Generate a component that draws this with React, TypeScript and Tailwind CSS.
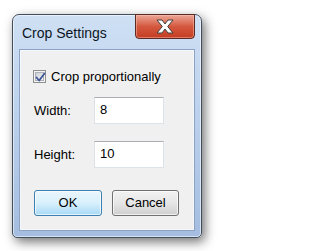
import { useState } from "react";

function CloseGlyph() {
  return (
    <svg width="20" height="15" viewBox="0 0 20 15">
      <path
        d="M2 1h5L10 5 13 1h5l-5.3 6.5L18 14h-5l-3-4-3 4H2l5.3-6.5z"
        fill="#ffffff"
        stroke="#404040"
        strokeWidth="1"
        strokeLinejoin="round"
      />
    </svg>
  );
}

function CheckBox({ checked }: { checked: boolean }) {
  return (
    <div className="h-[13px] w-[13px] border border-[#8e8f8f] bg-[#f4f4f4] p-[1px] shrink-0">
      <div className="relative h-full w-full border border-[#aeb3b9] bg-gradient-to-br from-[#cbcfd5] to-[#f6f6f6]">
        {checked && (
          <svg
            className="absolute -left-[1px] -top-[1px]"
            width="11"
            height="11"
            viewBox="0 0 11 11"
          >
            <path
              d="M1.5 5.5 4.2 8.5 9.5 1.5"
              fill="none"
              stroke="#3d5696"
              strokeWidth="1.8"
              strokeLinecap="round"
              strokeLinejoin="round"
            />
          </svg>
        )}
      </div>
    </div>
  );
}

function Field({ label, value }: { label: string; value: string }) {
  return (
    <div className="flex items-center">
      <span className="w-[60px] pl-[13px] box-content text-[13px] text-black">
        {label}
      </span>
      <div className="h-[27px] w-[70px] border border-[#dde2e8] border-t-[#abadb3] bg-white pl-[5px] pt-[4px] text-[13px] leading-[16px] text-black">
        {value}
      </div>
    </div>
  );
}

export default function App() {
  const [checked] = useState(true);

  return (
    <div
      className="h-[251px] w-[216px] bg-white pl-[12px] pt-[14px]"
      style={{ fontFamily: '"Liberation Sans", Arial, sans-serif' }}
    >
      <div className="relative flex h-[224px] w-[190px] flex-col rounded-t-[7px] rounded-b-[5px] border border-[#434e5d] bg-gradient-to-b from-[#cfe0f4] via-[#b9cfeb] to-[#a4bde0] shadow-[3px_4px_11px_rgba(0,0,0,0.55),inset_0_0_0_1px_rgba(255,255,255,0.55)]">
        <div className="flex h-[34px] items-center pl-[9px] pt-[2px] text-[14px] text-[#0c1624]">
          Crop Settings
        </div>

        <div className="absolute right-[6px] top-[-1px] flex h-[25px] w-[60px] items-center justify-center rounded-b-[4px] border border-[#5c2a22] bg-gradient-to-b from-[#eaa596] via-[#d4583e] to-[#c43c21] shadow-[inset_0_0_0_1px_rgba(255,200,190,0.45)]">
          <CloseGlyph />
        </div>

        <div className="mx-[6px] mb-[6px] flex-1 border border-[#8ea3c3]">
          <div className="flex h-full flex-col border border-[#f4f7fb] bg-[#f0f0f0]">
            <div className="flex items-center gap-[5px] pl-[12px] pt-[18px]">
              <CheckBox checked={checked} />
              <span className="text-[13px] leading-[15px] text-black">
                Crop proportionally
              </span>
            </div>

            <div className="mt-[13px] flex flex-col gap-[17px]">
              <Field label="Width:" value="8" />
              <Field label="Height:" value="10" />
            </div>

            <div className="mt-[22px] flex gap-[10px] pl-[13px]">
              <button className="h-[26px] w-[68px] rounded-[3px] border border-[#3c7fb1] bg-gradient-to-b from-[#eaf6fd] via-[#d9f0fc] to-[#a7d9f5] text-[13px] text-black shadow-[inset_0_0_0_1px_rgba(255,255,255,0.7)]">
                OK
              </button>
              <button className="h-[26px] w-[67px] rounded-[3px] border border-[#707070] bg-gradient-to-b from-[#f2f2f2] via-[#e6e6e6] to-[#cfcfcf] text-[13px] text-black shadow-[inset_0_0_0_1px_rgba(255,255,255,0.7)]">
                Cancel
              </button>
            </div>
          </div>
        </div>
      </div>
    </div>
  );
}
